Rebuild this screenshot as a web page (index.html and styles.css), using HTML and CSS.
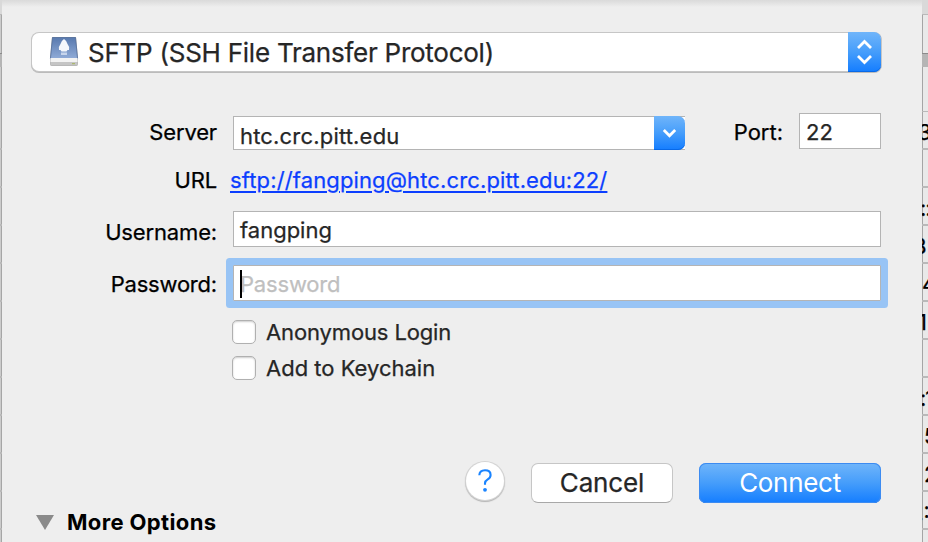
FILE: index.html
```html
<!DOCTYPE html>
<html lang="en">
<head>
<meta charset="utf-8">
<title>Connection</title>
<link rel="stylesheet" href="styles.css">
</head>
<body>
<div class="screen">
  <div class="behind behind-left">
    <i class="bar"></i><i class="tool"></i><i class="header"></i><i class="first"></i>
    <i class="row"></i><i class="row"></i><i class="row"></i><i class="row"></i><i class="row"></i><i class="row"></i><i class="row"></i><i class="row"></i><i class="row"></i><i class="row"></i><i class="row"></i><i class="row"></i>
  </div>
  <main class="sheet">
    <div class="popup">
      <svg class="drive" width="30" height="32" viewBox="0 0 30 32">
        <defs><linearGradient id="d" x1="0" y1="0" x2="0" y2="1"><stop offset="0" stop-color="#5879ae"/><stop offset="1" stop-color="#91acd8"/></linearGradient></defs>
        <path d="M3 1H27L29 22V28Q29 30 27 30H3Q1 30 1 28V22Z" fill="#aaa"/>
        <path d="M3.5 1.5H26.5L28.6 23H1.4Z" fill="url(#d)" stroke="#536f9d" stroke-width=".8"/>
        <path d="M1.4 22H28.6V26H1.4Z" fill="#f3f3f3"/>
        <path d="M1.4 26H28.6V28.2Q28.6 29.5 27 29.5H3Q1.4 29.5 1.4 28.2Z" fill="#c5c5c5"/>
        <path d="M15 3Q18 5 18.5 8Q21 11 20 14H18.5L17.5 15.5H12.5L11.5 14H10Q9 11 11.5 8Q12 5 15 3Z" fill="#f5f7fb"/>
        <path d="M12 16.5H18V19H12Z" fill="#c7d5ec"/>
        <path d="M23 27.7H26" stroke="#a5b65c"/>
      </svg>
      <span class="popup-text">SFTP (SSH File Transfer Protocol)</span>
      <span class="stepper"><svg width="33" height="40" viewBox="0 0 33 40"><path d="M10 16L16.5 9.5L23 16M10 24L16.5 30.5L23 24"/></svg></span>
    </div>
    <div class="line server-line">
      <label class="label">Server</label>
      <div class="combo"><span class="host">htc.crc.pitt.edu</span><span class="arrow"><svg width="31" height="34" viewBox="0 0 31 34"><path d="M9.8 14L15.5 19.7L21.2 14"/></svg></span></div>
      <label class="port-label">Port:</label>
      <div class="field port">22</div>
    </div>
    <div class="line url-line">
      <span class="label">URL</span>
      <a class="link">sftp://fangping@htc.crc.pitt.edu:22/</a>
    </div>
    <div class="line user-line">
      <label class="label">Username:</label>
      <div class="field wide">fangping</div>
    </div>
    <div class="line pass-line">
      <label class="label">Password:</label>
      <div class="field wide focus"><i class="caret"></i><span>Password</span></div>
    </div>
    <div class="check"><i class="box"></i><span class="anonymous">Anonymous Login</span></div>
    <div class="check"><i class="box"></i><span>Add to Keychain</span></div>
    <div class="actions">
      <span class="help"><svg width="14" height="24" viewBox="0 0 14 24"><path d="M1.3 6.2Q1.5 1.2 7 1.2Q12.6 1.2 12.6 6Q12.6 8.6 9.7 10.4Q7 12 7 14.2V15.7" fill="none" stroke="#1a84ff" stroke-width="2.1"/><circle cx="7" cy="20.8" r="1.9" fill="#1a84ff"/></svg></span>
      <span class="button cancel">Cancel</span>
      <span class="button connect">Connect</span>
    </div>
    <div class="more"><svg width="18" height="15" viewBox="0 0 18 15"><path d="M0 0H18L9 15Z" fill="#8a8a8a"/></svg><span>More Options</span></div>
  </main>
  <div class="behind behind-right">
    <i class="bar"></i><i class="tool"></i><i class="header"></i><i class="first"></i>
    <i class="row cut">3</i><i class="row"></i><i class="row colon">::</i><i class="row cut-more">8</i><i class="row">4</i><i class="row cut">1</i><i class="row"></i><i class="row colon">:1</i><i class="row inset">5</i><i class="row inset">2</i><i class="row cut-all">2:</i><i class="row"></i>
  </div>
</div>
</body>
</html>
```
FILE: styles.css
```css
* { box-sizing: border-box; }
body { margin: 0; overflow: hidden; }
.screen { display: grid; grid-template-columns: 2px 920px 6px; height: 542px; overflow: hidden; font: 22px/26px Inter, "Liberation Sans", sans-serif; color: #000; background: #eee; white-space: nowrap; -webkit-text-stroke: .25px; }
.behind { overflow: hidden; background: #e9e9e9; }
.behind i { display: block; font-style: normal; border-bottom: 2px solid #b9b9b9; }
.behind .bar { height: 15px; background: #d9d9d9; border-bottom-width: 1px; }
.behind .tool { height: 39px; border-bottom: 1px solid #8b8b8b; }
.behind .header { height: 13px; background: #b5b5b5; border: 0; }
.behind .first { height: 45px; border-bottom-width: 1px; }
.behind .row { height: 38px; line-height: 40px; }
.behind .cut { text-indent: -4px; }
.behind .cut-more { text-indent: -9px; }
.behind .cut-all { text-indent: -12px; }
.behind .colon { text-indent: -2px; letter-spacing: -1px; }
.behind .inset { text-indent: 2px; }
.behind-right { box-shadow: inset 1px 0 #a5a5a5; }
.behind-left { background: #ccc; box-shadow: inset -1px 0 #a6a6a6; }
.sheet { padding: 33px 41px 0 30px; background: linear-gradient(#dadada, #e5e5e5 4px, #eee 7px); }
.popup { display: flex; align-items: center; height: 38px; padding-left: 17px; background: #fff; border-radius: 7px; box-shadow: 0 0 0 1px #c6c6c6, 0 1px 0 1px #bbb; }
.popup-text { flex: 1; margin: 2px 0 0 9px; font-size: 26px; line-height: 30px; letter-spacing: -.25px; color: #262626; }
.stepper, .arrow { display: block; background: linear-gradient(#70b5fa, #459dfb 50%, #147dff); border-radius: 0 7px 7px 0; box-shadow: inset 0 -1px #0869e8; }
.stepper { height: 40px; }
.stepper svg, .arrow svg { display: block; fill: none; stroke: #fff; stroke-width: 2.8; }
.line { display: flex; align-items: flex-start; }
.label { width: 185px; margin-right: 16px; text-align: right; letter-spacing: -.15px; }
.server-line { margin-top: 42px; height: 37px; }
.server-line .label { padding-top: 6px; }
.combo { display: flex; width: 452px; height: 34px; margin-top: 3px; padding: 6px 0 0 6px; background: #fff; border: 1px solid #b4b4b4; border-right: 0; color: #262626; justify-content: space-between; }
.host { letter-spacing: .18px; }
.arrow { height: 34px; margin-top: -7px; }
.port-label { width: 98px; padding-top: 6px; text-align: right; margin-right: 16px; }
.field { height: 36px; padding: 5px 6px; background: #fff; border: 1px solid #b4b4b4; color: #262626; }
.port { width: 82px; }
.wide { flex: 1; }
.url-line { margin-top: 17px; height: 26px; }
.link { margin-left: -3px; color: #0b3eff; letter-spacing: .13px; text-decoration: underline; text-decoration-thickness: 2px; text-underline-offset: 3px; }
.user-line { margin-top: 18px; }
.user-line .label { padding-top: 8px; }
.pass-line .label { padding-top: 6px; letter-spacing: -.2px; }
.pass-line { margin-top: 18px; margin-bottom: 19px; }
.focus { display: flex; box-shadow: 0 0 0 7px #98c4f5; border-radius: 1px; color: #bfbfbf; letter-spacing: -.18px; }
.caret { width: 2px; height: 28px; margin: -1px -2px 0 0; background: #000; position: relative; }
.check { display: flex; align-items: center; gap: 10px; height: 24px; margin: 0 0 12px 200px; color: #262626; }
.anonymous { letter-spacing: -.13px; }
.box { width: 24px; height: 24px; border: 1px solid #b0b0b0; border-radius: 5px; background: #fff; box-shadow: inset 0 1px 2px #ccc; }
.actions { display: flex; height: 40px; margin-top: 83px; justify-content: flex-end; gap: 26px; }
.help { display: grid; place-items: center; width: 38px; height: 38px; margin: -1px 1px 0 0; border-radius: 50%; background: #fff; box-shadow: 0 0 0 1px #d4d4d4, 0 1px 1px 1px #b4b4b4; }
.button { display: grid; place-items: center; height: 40px; border-radius: 7px; font-size: 26px; line-height: 30px; color: #262626; letter-spacing: -.15px; }
.cancel { width: 142px; background: #fff; border: 1px solid #c6c6c6; border-bottom-color: #a8a8a8; }
.connect { width: 182px; color: #fff; -webkit-text-stroke: 0; letter-spacing: -.3px; background: linear-gradient(#70b5fa, #459dfb 50%, #147dff); box-shadow: inset 0 0 0 1px #3c8bf1, inset 0 -1px #0869e8; }
.more { display: flex; align-items: center; gap: 13px; margin: 6px 0 0 4px; font-weight: 700; letter-spacing: .36px; -webkit-text-stroke: 0; }
```
